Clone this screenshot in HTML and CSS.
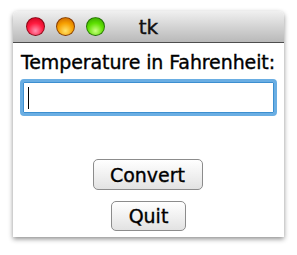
FILE: index.html
```html
<!DOCTYPE html>
<html>
<head>
  <title>tk</title>
  <link rel="stylesheet" href="styles.css">
</head>
<body>
  <div class="window">
    <div class="titlebar">
      <div class="lights">
        <span class="light red"></span>
        <span class="light orange"></span>
        <span class="light green"></span>
      </div>
      <div class="title">tk</div>
      <div></div>
    </div>
    <div class="content">
      <div class="label">Temperature in Fahrenheit:</div>
      <div class="entry"><span class="caret"></span></div>
      <div class="actions">
        <button class="btn convert">Convert</button>
        <button class="btn quit">Quit</button>
      </div>
    </div>
  </div>
</body>
</html>
```

FILE: styles.css
```css
body {
  margin: 0;
  padding: 11px 13px;
  background: #fff;
  font-family: "DejaVu Sans", sans-serif;
}

.window {
  width: 271px;
  background: #fff;
  border-radius: 5px 5px 0 0;
  box-shadow: 0 2px 5px rgba(0, 0, 0, 0.45);
}

.titlebar {
  height: 31px;
  display: grid;
  grid-template-columns: 1fr auto 1fr;
  align-items: center;
  border-bottom: 1px solid #4d4d4d;
  border-radius: 5px 5px 0 0;
  background: linear-gradient(#f0f0f0, #d4d4d4 50%, #b9b9b9);
}

.lights {
  display: flex;
  gap: 11px;
  padding-left: 13px;
}

.light {
  width: 19px;
  height: 19px;
  border-radius: 50%;
  box-sizing: border-box;
  border: 1px solid rgba(60, 0, 0, 0.55);
}

.red {
  background: radial-gradient(circle at 50% 75%, #ff8fb0 0%, #ff1a3e 50%, #c0001a 100%);
}

.orange {
  background: radial-gradient(circle at 50% 75%, #ffe26a 0%, #f7a000 50%, #c05800 100%);
}

.green {
  border-color: rgba(0, 50, 0, 0.55);
  background: radial-gradient(circle at 50% 75%, #c8ff80 0%, #5ee000 50%, #2f9a00 100%);
}

.title {
  font-size: 20px;
  color: #111;
  padding-top: 1px;
  -webkit-text-stroke: 0.4px #111;
}

.content {
  padding: 6px 7px 6px 7px;
}

.label {
  font-size: 19px;
  color: #000;
  padding-left: 1px;
  line-height: 26px;
  white-space: nowrap;
  letter-spacing: -0.1px;
  -webkit-text-stroke: 0.35px #000;
}

.entry {
  margin-top: 4px;
  height: 31px;
  border: 3px solid #6aaee3;
  border-radius: 4px;
  box-shadow: inset 0 0 0 1px #3d8fd0;
  display: flex;
  align-items: center;
  padding-left: 5px;
}

.caret {
  width: 1px;
  height: 22px;
  background: #000;
}

.actions {
  margin-top: 43px;
  display: flex;
  flex-direction: column;
  align-items: center;
  gap: 11px;
}

.btn {
  font-family: inherit;
  font-size: 19px;
  color: #000;
  -webkit-text-stroke: 0.35px #000;
  background: linear-gradient(#ffffff, #eeeeee 60%, #e2e2e2);
  border: 1px solid #8c8c8c;
  border-radius: 5px;
  padding: 0;
  height: 31px;
}

.convert {
  width: 110px;
  margin-left: -2px;
}

.quit {
  width: 75px;
  height: 30px;
}
```
